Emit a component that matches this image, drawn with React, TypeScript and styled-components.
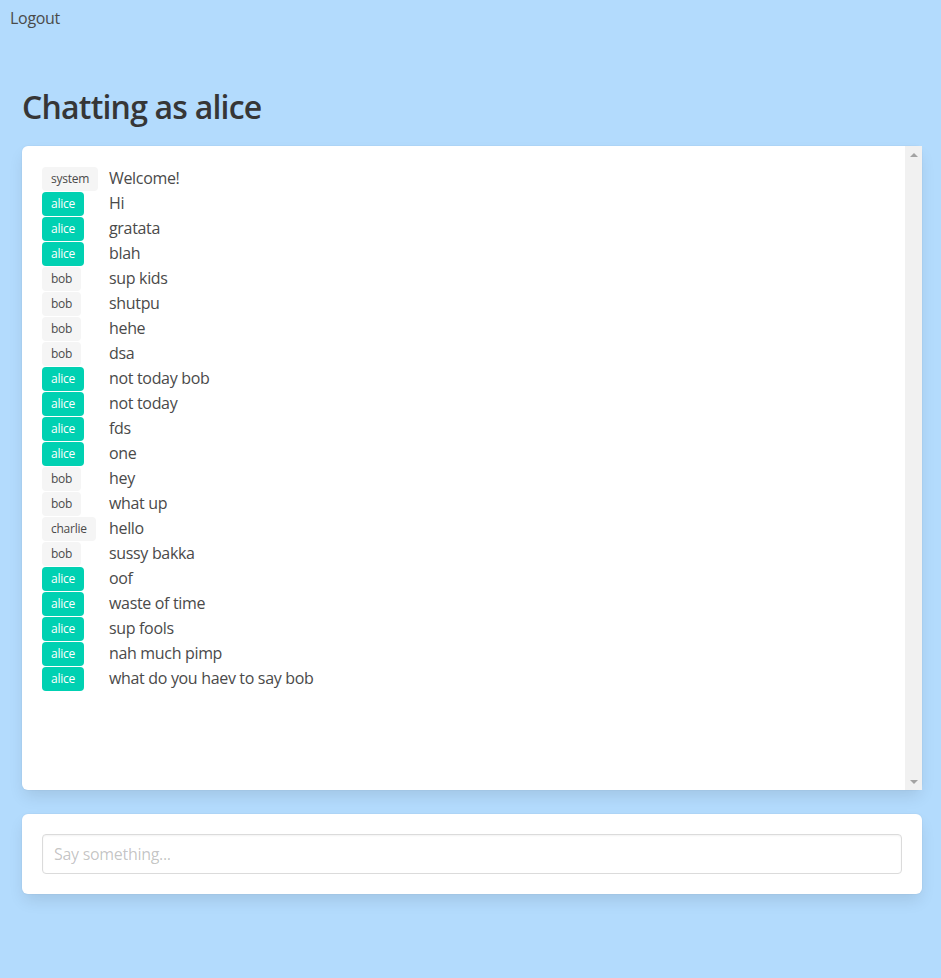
import React from "react";
import styled, { createGlobalStyle } from "styled-components";

const GlobalStyle = createGlobalStyle`
  html, body {
    margin: 0;
    padding: 0;
    background: #b3dbfd;
  }
  body {
    font-family: "Open Sans", "Noto Sans", sans-serif;
    font-size: 16px;
    color: #4a4a4a;
  }
  * { box-sizing: border-box; }
`;

const Page = styled.div`
  min-height: 978px;
  background: #b3dbfd;
`;

const TopBar = styled.div`
  display: flex;
  padding: 6px 10px;
  height: 40px;
`;

const LogoutButton = styled.button`
  background: none;
  border: none;
  padding: 0;
  font: inherit;
  font-size: 16px;
  line-height: 24px;
  letter-spacing: -0.3px;
  color: #4a4a4a;
  cursor: pointer;
  height: 24px;
`;

const Main = styled.main`
  padding: 0 19px 0 22px;
`;

const Title = styled.h1`
  margin: 49px 0 21px;
  font-size: 32px;
  line-height: 36px;
  font-weight: 600;
  letter-spacing: -0.8px;
  color: #363636;
`;

const Box = styled.div`
  background: #fff;
  border-radius: 6px;
  box-shadow: 0 0.5em 1em -0.125em rgba(10, 10, 10, 0.1),
    0 0 0 1px rgba(10, 10, 10, 0.02);
  padding: 20px;
`;

const ChatBox = styled(Box)`
  display: flex;
  height: 644px;
  padding: 0;
  margin-bottom: 24px;
`;

const MessageList = styled.div`
  flex: 1;
  min-width: 0;
  overflow-y: auto;
  padding: 20px 3px 20px 20px;
  scrollbar-width: none;
  &::-webkit-scrollbar {
    display: none;
  }
`;

const ScrollTrack = styled.div`
  width: 17px;
  flex-shrink: 0;
  background: #f1f1f1;
  display: flex;
  flex-direction: column;
  justify-content: space-between;
  align-items: center;
  padding: 7px 0 6px;
`;

const Arrow = styled.span<{ $down?: boolean }>`
  width: 0;
  height: 0;
  border-left: 4px solid transparent;
  border-right: 4px solid transparent;
  ${(p) =>
    p.$down
      ? "border-top: 4px solid #a3a3a3;"
      : "border-bottom: 4px solid #a3a3a3;"}
`;

const MessageRow = styled.div`
  display: grid;
  grid-template-columns: 67px 1fr;
  align-items: center;
  height: 25px;
  line-height: 25px;
`;

const Tag = styled.span<{ $self: boolean }>`
  justify-self: start;
  display: inline-flex;
  align-items: center;
  height: 24px;
  padding: 0 9px;
  border-radius: 4px;
  font-size: 12px;
  line-height: 1.5;
  letter-spacing: -0.25px;
  background: ${(p) => (p.$self ? "#00d1b2" : "#f5f5f5")};
  color: ${(p) => (p.$self ? "#fff" : "#4a4a4a")};
`;

const MessageText = styled.span`
  font-size: 16px;
  letter-spacing: -0.33px;
  color: #4a4a4a;
`;

const Input = styled.input`
  display: block;
  width: 100%;
  height: 40px;
  border: 1px solid #dbdbdb;
  border-radius: 4px;
  padding: 0 11px;
  font: inherit;
  font-size: 16px;
  letter-spacing: -0.3px;
  color: #363636;
  background: #fff;
  box-shadow: inset 0 0.0625em 0.125em rgba(10, 10, 10, 0.05);
  outline: none;
  &::placeholder {
    color: rgba(54, 54, 54, 0.3);
  }
`;

const messages: [string, string][] = [
  ["system", "Welcome!"],
  ["alice", "Hi"],
  ["alice", "gratata"],
  ["alice", "blah"],
  ["bob", "sup kids"],
  ["bob", "shutpu"],
  ["bob", "hehe"],
  ["bob", "dsa"],
  ["alice", "not today bob"],
  ["alice", "not today"],
  ["alice", "fds"],
  ["alice", "one"],
  ["bob", "hey"],
  ["bob", "what up"],
  ["charlie", "hello"],
  ["bob", "sussy bakka"],
  ["alice", "oof"],
  ["alice", "waste of time"],
  ["alice", "sup fools"],
  ["alice", "nah much pimp"],
  ["alice", "what do you haev to say bob"],
];

export default function App() {
  const me = "alice";
  return (
    <Page>
      <GlobalStyle />
      <TopBar>
        <LogoutButton>Logout</LogoutButton>
      </TopBar>
      <Main>
        <Title>Chatting as {me}</Title>
        <ChatBox>
          <MessageList>
            {messages.map(([user, text], i) => (
              <MessageRow key={i}>
                <Tag $self={user === me}>{user}</Tag>
                <MessageText>{text}</MessageText>
              </MessageRow>
            ))}
          </MessageList>
          <ScrollTrack aria-hidden>
            <Arrow />
            <Arrow $down />
          </ScrollTrack>
        </ChatBox>
        <Box>
          <Input placeholder="Say something..." />
        </Box>
      </Main>
    </Page>
  );
}
